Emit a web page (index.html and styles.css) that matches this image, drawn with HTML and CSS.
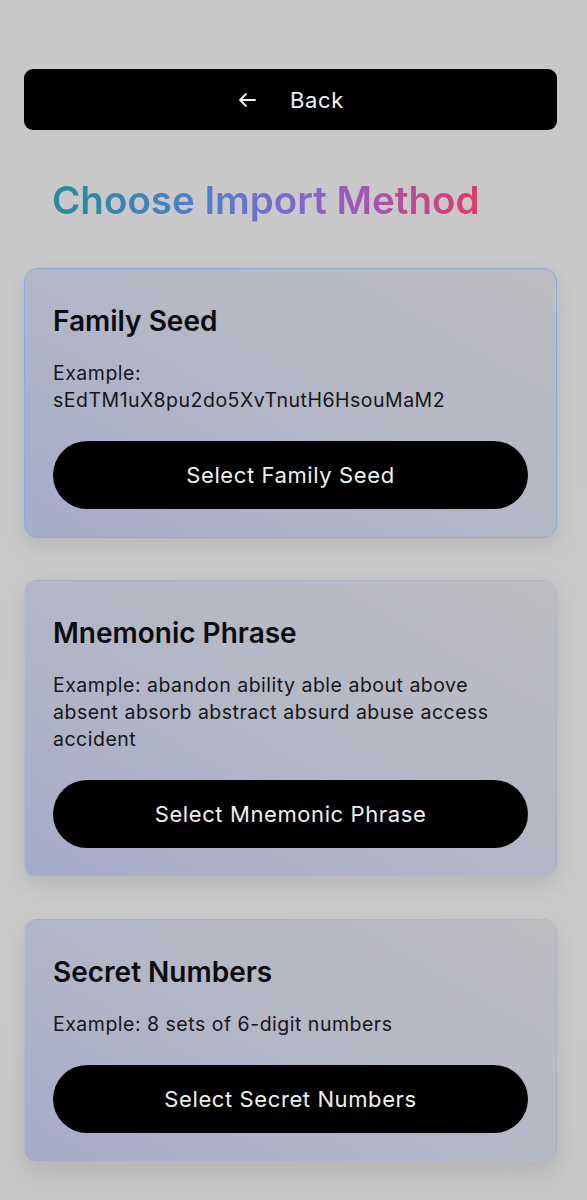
FILE: index.html
```html
<!DOCTYPE html>
<html lang="en">
<head>
<meta charset="utf-8">
<title>Choose Import Method</title>
<link rel="stylesheet" href="styles.css">
</head>
<body>
<main class="page">
  <button class="back-btn" type="button">
    <svg class="back-icon" viewBox="0 0 20 20" width="20" height="20" aria-hidden="true">
      <path d="M18 10H3M9 4L3 10l6 6" fill="none" stroke="currentColor" stroke-width="1.8" stroke-linecap="round" stroke-linejoin="round"/>
    </svg>
    <span>Back</span>
  </button>

  <h1 class="title">Choose Import Method</h1>

  <section class="card card-selected">
    <h2 class="card-title">Family Seed</h2>
    <p class="card-text">Example:<br>sEdTM1uX8pu2do5XvTnutH6HsouMaM2</p>
    <button class="pill-btn" type="button">Select Family Seed</button>
  </section>

  <section class="card">
    <h2 class="card-title">Mnemonic Phrase</h2>
    <p class="card-text">Example: abandon ability able about above absent absorb abstract absurd abuse access accident</p>
    <button class="pill-btn" type="button">Select Mnemonic Phrase</button>
  </section>

  <section class="card">
    <h2 class="card-title">Secret Numbers</h2>
    <p class="card-text">Example: 8 sets of 6-digit numbers</p>
    <button class="pill-btn" type="button">Select Secret Numbers</button>
  </section>
</main>
</body>
</html>
```

FILE: styles.css
```css
* {
  box-sizing: border-box;
}

html, body {
  margin: 0;
  padding: 0;
}

body {
  background: linear-gradient(180deg, #c8c8c8 0%, #cacaca 80%, #c4c4c4 100%);
  font-family: Inter, "Noto Sans", "Liberation Sans", sans-serif;
  color: #111;
  min-height: 1200px;
}

.page {
  padding: 69px 30px 40px 24px;
  display: flex;
  flex-direction: column;
}

.back-btn {
  height: 61px;
  width: 100%;
  border: none;
  border-radius: 9px;
  background: #000;
  color: #f2f2f2;
  font-family: inherit;
  font-size: 22px;
  font-weight: 400;
  letter-spacing: 0.6px;
  display: flex;
  align-items: center;
  justify-content: center;
  gap: 33px;
  padding: 0;
}

.back-icon {
  width: 20px;
  height: 20px;
}

.title {
  margin: 47px 0 45px 28px;
  font-size: 38.5px;
  line-height: 46px;
  font-weight: 600;
  letter-spacing: 0;
  background: linear-gradient(90deg, #268b95 0%, #4f80c8 35%, #7a6ad0 55%, #a058b4 72%, #df3a68 100%);
  -webkit-background-clip: text;
  background-clip: text;
  color: transparent;
  align-self: flex-start;
}

.card {
  border: 1px solid transparent;
  border-radius: 13px;
  padding: 35px 28px 28px 28px;
  background: linear-gradient(30deg, #a6abca 0%, #b3b6c6 45%, #bdbdc1 100%);
  box-shadow: 0 8px 22px rgba(0, 0, 0, 0.10);
  margin-bottom: 42px;
}

.card-selected {
  border-color: #8aabe0;
}

.card-title {
  margin: 0 0 21px 0;
  font-size: 28px;
  line-height: 35px;
  font-weight: 600;
  letter-spacing: 0;
  color: #0c0c10;
}

.card-text {
  margin: 0 0 27px 0;
  font-size: 19.5px;
  line-height: 27px;
  font-weight: 400;
  letter-spacing: 0.5px;
  color: #16161a;
}

.pill-btn {
  width: 100%;
  height: 68px;
  border: none;
  border-radius: 34px;
  background: #000;
  color: #f0f0f0;
  font-family: inherit;
  font-size: 22px;
  font-weight: 400;
  letter-spacing: 0.6px;
  display: block;
}
```
